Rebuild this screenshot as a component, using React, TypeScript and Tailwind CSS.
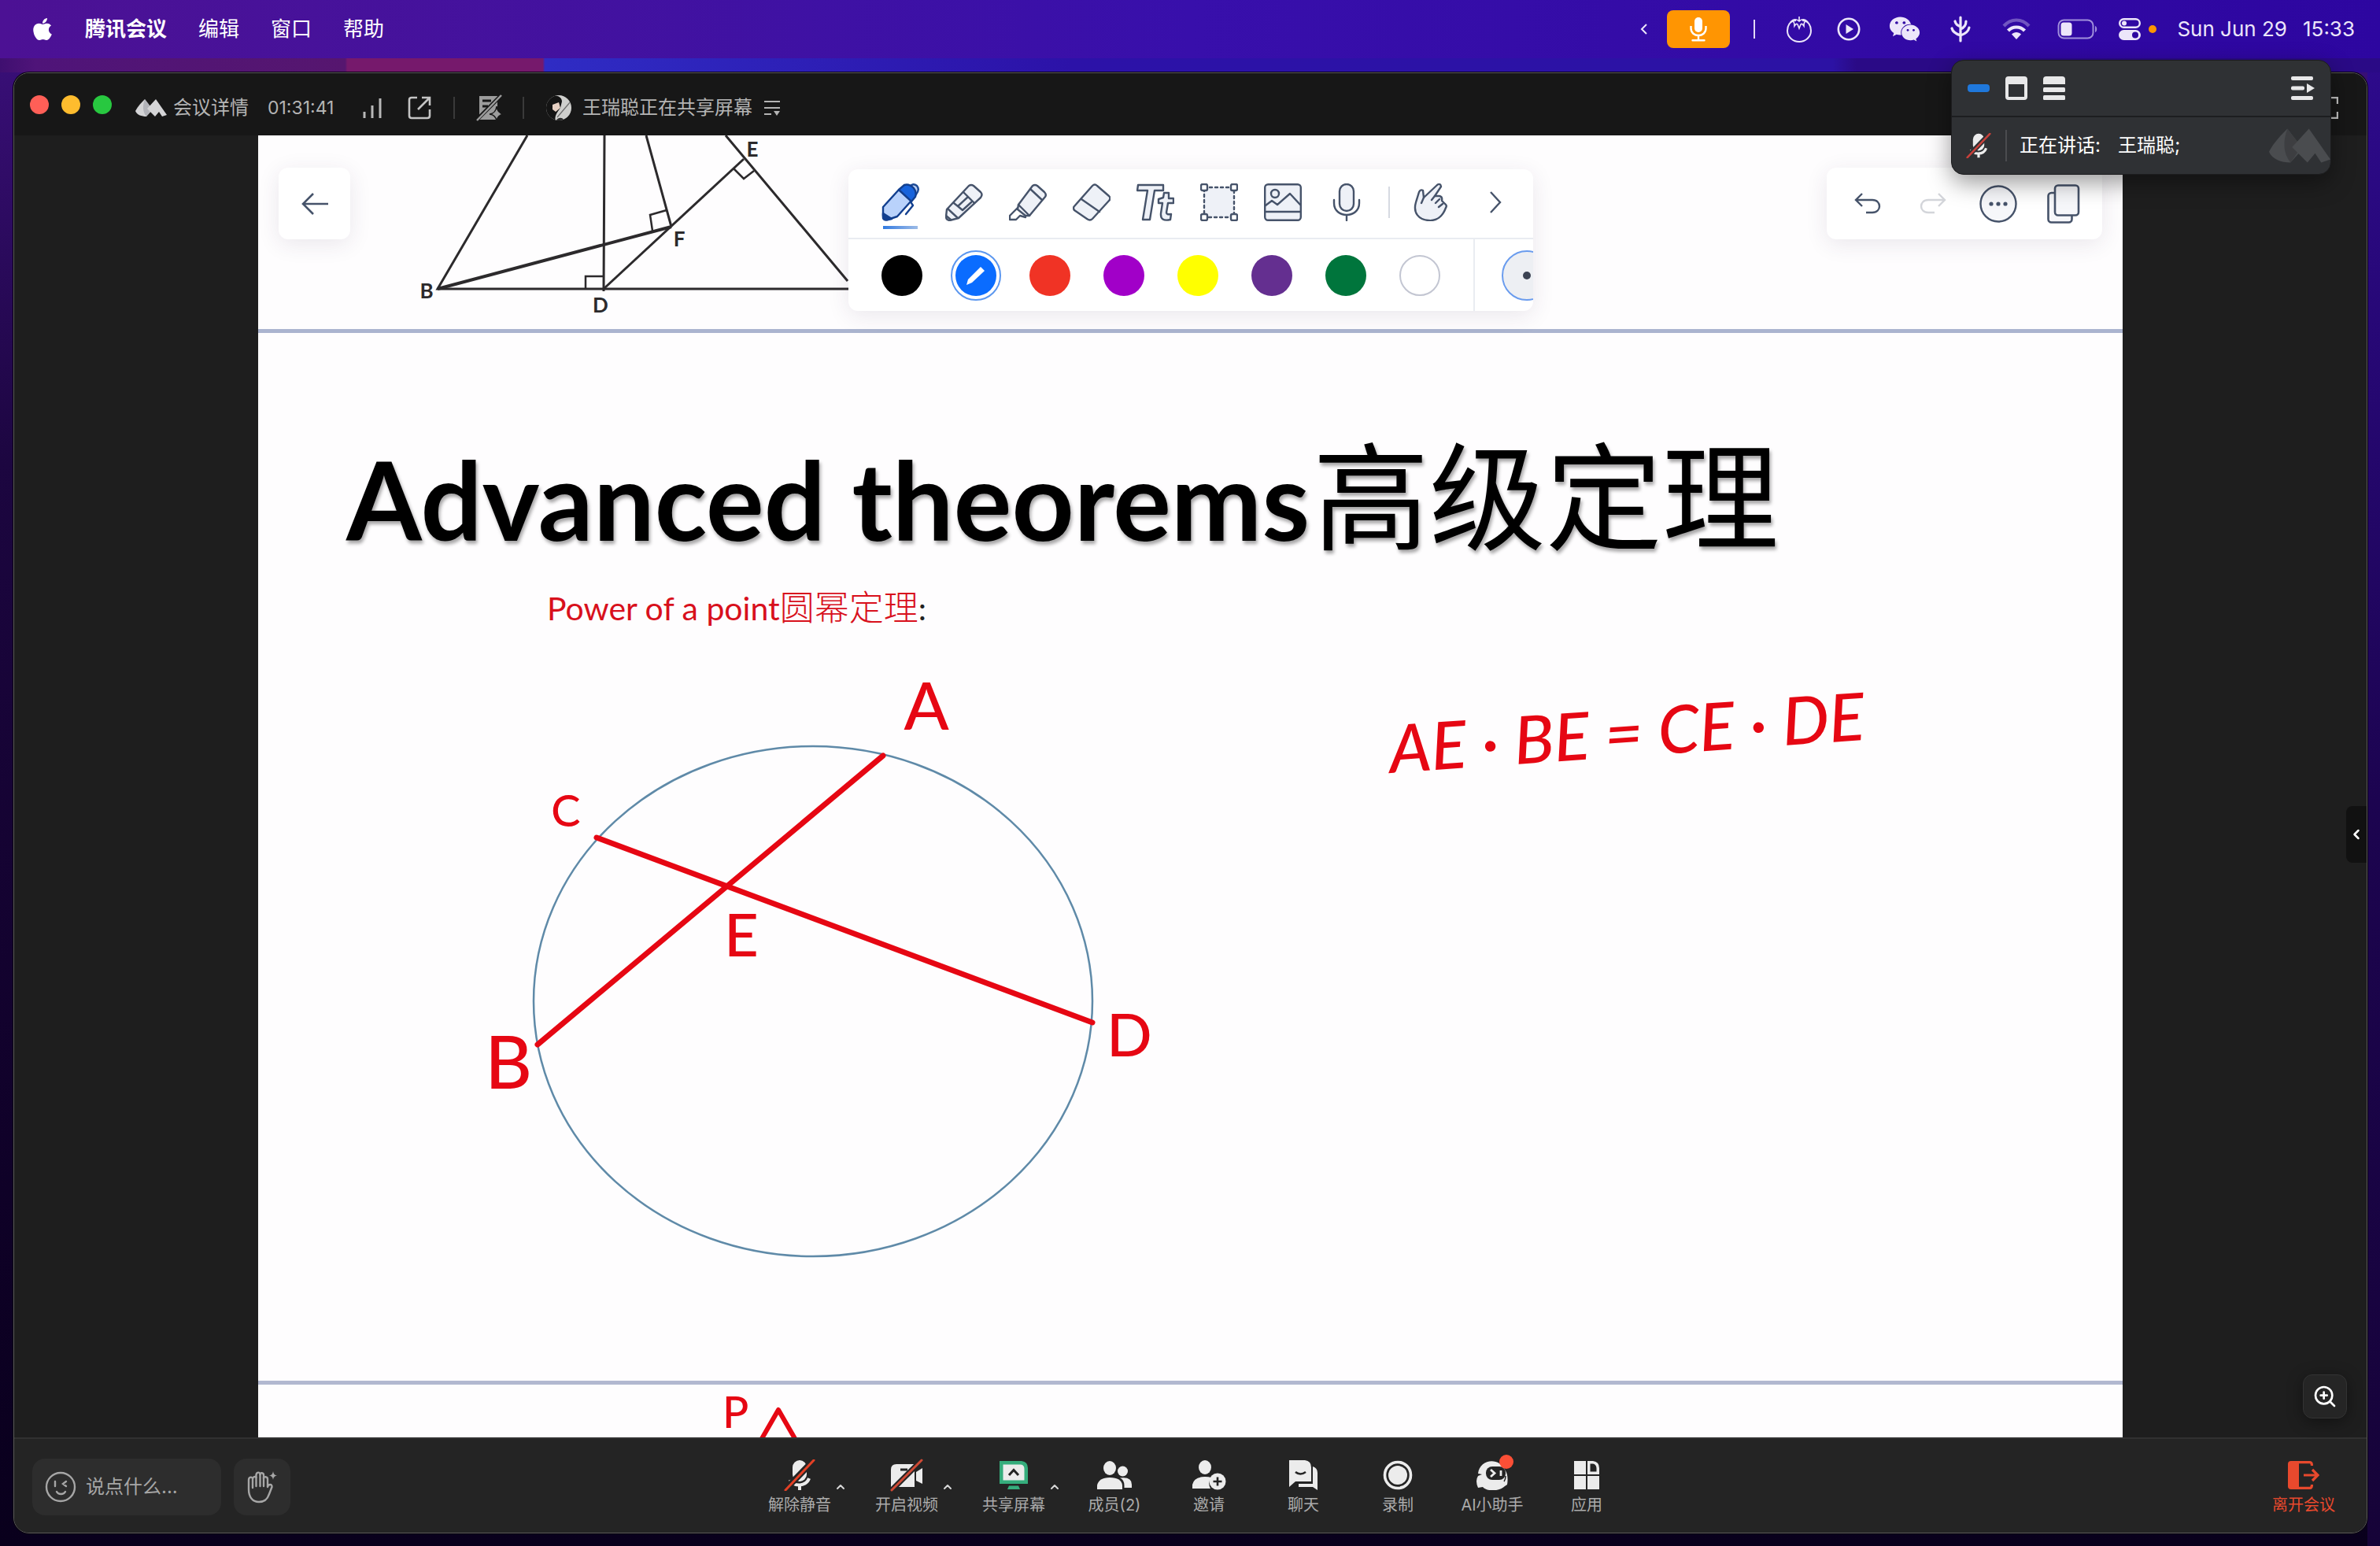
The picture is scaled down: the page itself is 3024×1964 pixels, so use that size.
import React from "react";
import type { ReactNode } from "react";
import { FaApple, FaWeixin } from "react-icons/fa";
import { ChevronLeft, ChevronUp, ZoomIn } from "lucide-react";

/* ---------- shared marks ---------- */

function MeetingLogo({ className, from, to }: { className: string; from: string; to: string }) {
  return (
    <svg viewBox="0 0 40 22" className={className} aria-hidden="true">
      <path d="M0 15 C3 9 8 4 12 0 L22 13 L14 22 C8 22 2 20 0 15 Z" fill={from} />
      <path d="M12 0 L21 12 L14 22 C9 16 9 8 12 0 Z" fill={to} opacity="0.7" />
      <path d="M26 0 L40 20 L34 22 L30 16 L25 22 L15 12 Z" fill={from} />
    </svg>
  );
}

function MutedMic({ className, slash, gap }: { className: string; slash: string; gap: string }) {
  return (
    <svg viewBox="0 0 40 40" className={className} fill="none" aria-hidden="true">
      <rect x="11" y="1" width="18" height="27" rx="9" fill="#ececec" />
      <path d="M8 26 C10 34 28 36 32 24" stroke="#ececec" strokeWidth="4" />
      <path d="M20 32 V39" stroke="#ececec" strokeWidth="4" />
      <path d="M1 39 L38 1" stroke={gap} strokeWidth="8" />
      <path d="M2 39 L38 1" stroke={slash} strokeWidth="3" strokeLinecap="round" />
    </svg>
  );
}

/* ---------- macOS menu bar ---------- */

function MenuBar() {
  return (
    <header className="flex h-[74px] items-center justify-between bg-linear-to-r from-[#4c1194] via-[#380fab] to-[#2d06a0] pr-8 pl-[38px] text-[26px] leading-8 text-white">
      <nav className="flex items-center gap-10" aria-label="菜单栏">
        <FaApple className="h-8 w-8" />
        <button className="-ml-0.5 font-bold">腾讯会议</button>
        <button>编辑</button>
        <button>窗口</button>
        <button>帮助</button>
      </nav>
      <div className="flex items-center text-[#ece6fa]">
        <svg viewBox="0 0 10 14" className="mr-6 h-3.5 w-2.5" fill="none" stroke="currentColor" strokeWidth="2">
          <path d="M8 1 L2 7 L8 13" />
        </svg>
        <button aria-label="麦克风" className="flex h-12 w-20 items-center justify-center rounded-lg bg-[#ff9502]">
          <svg viewBox="0 0 24 32" className="h-8 w-6" fill="none" stroke="#fff" strokeWidth="2.4">
            <rect x="7" y="1" width="10" height="19" rx="5" fill="#fff" stroke="none" />
            <path d="M2.500 12 V15 C2.500 27 21.500 27 21.500 15 V12" />
            <path d="M12 24 V30 M4.500 30.200 H19.500" strokeLinecap="round" />
          </svg>
        </button>
        <span className="ml-[30px] h-6 w-0.5 bg-[#e2d8f6]" />
        {/* tomato timer */}
        <svg viewBox="0 0 32 34" className="ml-10 h-[34px] w-8" fill="none" stroke="currentColor" strokeWidth="2">
          <path d="M12 6 C4 6 1 13 1 19 C1 27 8 33 16 33 C24 33 31 27 31 19 C31 13 28 6 20 6" />
          <path d="M16 1 V7 M16 7 C12 3 8 5 6 7 C9 7 10 8 10 13 C12 10 13 10 14 11 L16 16 L18 11 C19 10 20 10 22 13 C22 8 23 7 26 7 C24 5 20 3 16 7 Z" strokeWidth="1.600" />
        </svg>
        <svg viewBox="0 0 30 30" className="ml-8 h-[30px] w-[30px]" fill="none" stroke="currentColor" strokeWidth="2.600">
          <circle cx="15" cy="15" r="13.200" />
          <path d="M11.500 9 V21 L21 15 Z" fill="currentColor" stroke="none" />
        </svg>
        <FaWeixin className="ml-9 h-10 w-10" />
        {/* sprout */}
        <svg viewBox="0 0 26 34" className="ml-[38px] h-[34px] w-[26px]" fill="none" stroke="currentColor" strokeWidth="3.200" strokeLinecap="round">
          <path d="M13 2 V32 M13 17 C18 15 20 12 20 7 M13 14 C9 12 7 11 6 7 M13 25 C19 23 23 20 24 15 M13 25 C7 23 3 20 2 16" />
        </svg>
        {/* wifi */}
        <svg viewBox="0 0 36 28" className="ml-10 h-7 w-9" fill="none" stroke="currentColor" strokeWidth="4.200">
          <path d="M2 10 C11 0 25 0 34 10" opacity="0.350" />
          <path d="M7.500 16 C13 10 23 10 28.500 16" />
          <path d="M12 20.500 C15 17 21 17 24 20.500 L18 27 Z" fill="currentColor" stroke="none" />
        </svg>
        {/* battery */}
        <svg viewBox="0 0 52 26" className="ml-[34px] h-[26px] w-[52px]" fill="none">
          <rect x="1.500" y="1.500" width="44" height="23" rx="7" stroke="#a08fdb" strokeWidth="2" />
          <rect x="4.500" y="4.500" width="14" height="17" rx="3.500" fill="currentColor" />
          <path d="M48 9 C51 10 51 16 48 17 Z" fill="#a08fdb" />
        </svg>
        {/* control centre */}
        <svg viewBox="0 0 28 28" className="ml-[26px] h-7 w-7" fill="none">
          <rect x="1.200" y="1.200" width="25.600" height="10.600" rx="5.300" stroke="currentColor" strokeWidth="2.400" />
          <circle cx="7" cy="6.500" r="3" fill="currentColor" />
          <rect x="0" y="15" width="28" height="13" rx="6.500" fill="currentColor" />
          <circle cx="21" cy="21.500" r="4" fill="#2d06a0" />
        </svg>
        <span className="ml-2.5 h-2.5 w-2.5 rounded-full bg-[#ff9502]" />
        <time className="ml-[26px] flex gap-5">
          <span>Sun Jun 29</span>
          <span>15:33</span>
        </time>
      </div>
    </header>
  );
}

/* ---------- window title bar ---------- */

function TitleBar() {
  return (
    <div className="flex h-[79px] shrink-0 items-center bg-[#171717] pt-2 pl-5 text-2xl leading-8 text-[#b4b4b4]">
      <div className="flex gap-4 pb-2">
        <button aria-label="关闭" className="h-6 w-6 rounded-full bg-[#ff5f57]" />
        <button aria-label="最小化" className="h-6 w-6 rounded-full bg-[#febc2e]" />
        <button aria-label="缩放" className="h-6 w-6 rounded-full bg-[#28c840]" />
      </div>
      <button className="ml-[30px] flex items-center gap-2">
        <MeetingLogo className="h-[22px] w-10" from="#d4d4d6" to="#a4a5ac" />
        会议详情
      </button>
      <span className="ml-6 w-24 text-[23px]">01:31:41</span>
      <svg viewBox="0 0 26 26" className="ml-6 h-[26px] w-[26px]" stroke="#b8b8b8" strokeWidth="3">
        <path d="M3 26 V18 M13 26 V10 M23 26 V1" />
      </svg>
      <button aria-label="弹出" className="ml-8">
        <svg viewBox="0 0 30 30" className="h-[30px] w-[30px]" fill="none" stroke="#c4c4c4" strokeWidth="2.600">
          <path d="M12 2 H5 Q2 2 2 5 V25 Q2 28 5 28 H25 Q28 28 28 25 V17" />
          <path d="M18 2 H28 V12 M28 2 L13 17" />
        </svg>
      </button>
      <span className="ml-7 h-7 w-0.5 bg-[#3a3a3a]" />
      <svg viewBox="0 0 36 34" className="ml-[26px] h-[34px] w-9">
        <path d="M5 2 H28 V32 H5 Z" fill="#9c9c9c" />
        <path d="M9 8 H20 M9 15 H16" stroke="#171717" strokeWidth="3" />
        <path d="M1 33 L33 1" stroke="#171717" strokeWidth="5" />
        <path d="M2 33 L33 1" stroke="#9c9c9c" strokeWidth="2.500" />
        <path d="M27 15 Q28 24 36 25 Q28 26 27 34 Q26 26 18 25 Q26 24 27 15 Z" fill="#9c9c9c" stroke="#171717" strokeWidth="1.500" />
      </svg>
      <span className="ml-6 h-7 w-0.5 bg-[#3a3a3a]" />
      <svg viewBox="0 0 36 36" className="ml-[26px] h-9 w-9">
        <defs>
          <clipPath id="avatar-clip">
            <circle cx="18" cy="18" r="16" />
          </clipPath>
        </defs>
        <g clipPath="url(#avatar-clip)">
          <rect width="36" height="36" fill="#cfcfcd" />
          <path d="M2 10 C4 0 22 0 22 10 L20 18 C16 24 12 28 14 36 H2 Z" fill="#141414" />
          <path d="M10 14 L18 11 L20 18 L14 23 L10 20 Z" fill="#e6cfc2" />
          <path d="M14 36 C16 28 26 30 24 36 Z" fill="#2a2a2a" />
          <path d="M16 30 L33 10" stroke="#6b6b6b" strokeWidth="1.200" />
        </g>
      </svg>
      <button className="ml-3 flex items-center gap-[14px]">
        王瑞聪正在共享屏幕
        <svg viewBox="0 0 22 20" className="h-5 w-[22px]" stroke="#b4b4b4" strokeWidth="2.200">
          <path d="M1 2 H21 M1 10 H21 M1 18 H10" />
          <path d="M13 14 H21 L17 20 Z" fill="#b4b4b4" stroke="none" />
        </svg>
      </button>
      <button aria-label="全屏" className="mr-9 ml-auto">
        <svg viewBox="0 0 28 28" className="h-7 w-7" fill="none" stroke="#c4c4c4" strokeWidth="2.400">
          <path d="M1 9 V1 H9 M19 1 H27 V9 M27 19 V27 H19 M9 27 H1 V19" />
        </svg>
      </button>
    </div>
  );
}

/* ---------- floating speaker panel ---------- */

function SpeakerPanel() {
  return (
    <aside className="absolute top-[76px] right-[62px] z-20 w-[483px] overflow-hidden rounded-2xl border border-[#1c1c1e] bg-[#2f3134] text-2xl text-white shadow-[0_10px_30px_rgba(0,0,0,0.4)]">
      <div className="flex h-[72px] items-center gap-5 border-b-2 border-[#1d1e20] px-5">
        <button aria-label="最小" className="flex h-8 w-7 items-center">
          <span className="h-2.5 w-7 rounded-sm bg-[#1f78dc]" />
        </button>
        <button aria-label="单窗口">
          <svg viewBox="0 0 28 30" className="h-[30px] w-7">
            <path fillRule="evenodd" d="M4 0 H24 Q28 0 28 4 V26 Q28 30 24 30 H4 Q0 30 0 26 V4 Q0 0 4 0 Z M4 10 V26 H24 V10 Z" fill="#e8e8e9" />
          </svg>
        </button>
        <button aria-label="列表">
          <svg viewBox="0 0 28 30" className="h-[30px] w-7" fill="#e8e8e9">
            <path d="M0 10 V4 Q0 0 4 0 H24 Q28 0 28 4 V10 Z" />
            <rect y="14" width="28" height="6" rx="1.500" />
            <rect y="24" width="28" height="6" rx="1.500" />
          </svg>
        </button>
        <button aria-label="收起" className="ml-auto">
          <svg viewBox="0 0 30 30" className="h-[30px] w-[30px]" fill="#e8e8e9">
            <rect width="28" height="5" rx="2" />
            <rect y="12.500" width="17" height="5" rx="2" />
            <path d="M20 9 L30 15 L20 21 Z" />
            <rect y="25" width="28" height="5" rx="2" />
          </svg>
        </button>
      </div>
      <div className="flex h-[72px] items-center">
        <MutedMic className="ml-[18px] h-8 w-8" slash="#c8403a" gap="#2f3134" />
        <span className="ml-[18px] h-10 w-0.5 bg-[#4b4c4f]" />
        <span className="ml-4">正在讲话:</span>
        <span className="ml-[22px]">王瑞聪;</span>
        <MeetingLogo className="ml-auto h-[44px] w-[78px]" from="#4a4c4f" to="#38393c" />
      </div>
    </aside>
  );
}

/* ---------- whiteboard tools ---------- */

const ink = "#46536a";
const wash = "#eef1f7";

function Glyph({ children }: { children: ReactNode }) {
  return (
    <svg viewBox="0 0 48 48" className="h-12 w-12" fill="none" stroke={ink} strokeWidth="2.400" strokeLinejoin="round" strokeLinecap="round">
      {children}
    </svg>
  );
}

const tools: { label: string; icon: ReactNode }[] = [
  {
    label: "钢笔",
    icon: (
      <Glyph>
        <path d="M36 4 Q40 -1 45 3 Q49 8 44 14 Z" fill="#b9cdf2" stroke="#1f4c96" />
        <path d="M2 30 L22 8 L38 22 L20 42 L8 46 Q1 48 2 38 Z" fill="#b9d2fb" stroke="#123f8f" />
        <path d="M22 8 L29 2 Q35 0 41 6 Q45 11 43 17 L38 23 Z" fill="#1763dc" stroke="#123f8f" />
        <path d="M2 38 L2 44 Q3 47 8 46 L13 45 Z" fill="#123f8f" stroke="#123f8f" />
        <path d="M38 25 L40 28 L31 39" stroke="#123f8f" />
      </Glyph>
    ),
  },
  {
    label: "铅笔",
    icon: (
      <Glyph>
        <path d="M2 33 L30 3 Q33 1 36 3 L45 11 Q48 14 45 18 L17 44 L6 47 Q1 47 1 42 Z" fill={wash} />
        <path d="M23 11 L37 25 M3 32 L16 44 M11 25 L16 29 L29 17 M16 29 L22 34 L33 24 M1 41 L7 46" />
      </Glyph>
    ),
  },
  {
    label: "荧光笔",
    icon: (
      <Glyph>
        <path d="M12 27 L30 3 Q33 1 36 3 L45 11 Q48 14 46 17 L26 41 L21 41 L11 33 Z" fill={wash} />
        <path d="M27 7 L42 21 M12 27 L26 41 M11 31 L1 41 V46 H9 L14 41 L21 43" />
      </Glyph>
    ),
  },
  {
    label: "橡皮擦",
    icon: (
      <Glyph>
        <path d="M2 29 L25 3 Q28 0 31 3 L46 16 Q49 19 46 22 L25 45 Q22 48 18 45 L2 34 Q0 31 2 29 Z" fill={wash} />
        <path d="M11 20 L34 36" />
      </Glyph>
    ),
  },
  {
    label: "文本",
    icon: (
      <Glyph>
        <path d="M2 2 H34 V9 H23 L17 46 H8 L14 9 H1 Z" fill={wash} />
        <path d="M35 12 H41 V19 H47 V25 H40 L38 37 Q38 40 44 39 L43 46 Q30 49 31 38 L33 25 H28 V20 L34 18 Z" fill={wash} />
      </Glyph>
    ),
  },
  {
    label: "选择",
    icon: (
      <Glyph>
        <rect x="5" y="5" width="38" height="38" fill={wash} strokeDasharray="3 4" />
        <rect x="1" y="1" width="8" height="8" rx="2" fill="#fff" />
        <rect x="39" y="1" width="8" height="8" rx="2" fill="#fff" />
        <rect x="1" y="39" width="8" height="8" rx="2" fill="#fff" />
        <rect x="39" y="39" width="8" height="8" rx="2" fill="#fff" />
      </Glyph>
    ),
  },
  {
    label: "图片",
    icon: (
      <Glyph>
        <rect x="1.200" y="1.200" width="45.600" height="45.600" rx="4" fill={wash} />
        <circle cx="14" cy="13" r="5" />
        <path d="M2 28 L10 22 L17 27 L33 13 L46 27 M1 36 H47" />
      </Glyph>
    ),
  },
  {
    label: "录音",
    icon: (
      <Glyph>
        <rect x="15" y="1" width="18" height="34" rx="9" fill={wash} />
        <path d="M8 21 V25 C8 45 40 45 40 25 V21 M24 40 V47" />
      </Glyph>
    ),
  },
];

const swatches = [
  { name: "黑色", tone: "bg-black" },
  { name: "蓝色", tone: "bg-[#0a6cff]" },
  { name: "红色", tone: "bg-[#f03325]" },
  { name: "洋红", tone: "bg-[#a100c8]" },
  { name: "黄色", tone: "bg-[#ffff00]" },
  { name: "紫色", tone: "bg-[#642f90]" },
  { name: "绿色", tone: "bg-[#00753c]" },
  { name: "白色", tone: "border-2 border-[#c3c6d2] bg-white" },
];

const card = "rounded-xl bg-white shadow-[0_6px_28px_rgba(60,40,80,0.1)]";

function BoardTools() {
  return (
    <div className="absolute inset-x-0 top-[41px] grid grid-cols-[1fr_auto_1fr] items-start px-[26px]">
      <button aria-label="返回" className={`flex h-[91px] w-[91px] items-center justify-center ${card}`}>
        <svg viewBox="0 0 34 28" className="h-7 w-[34px]" fill="none" stroke={ink} strokeWidth="2.600">
          <path d="M15 1 L2 14 L15 27 M2 14 H34" />
        </svg>
      </button>
      <div className={`mt-0.5 w-[870px] overflow-hidden ${card}`}>
        <div className="flex h-[89px] items-center gap-[33px] border-b-2 border-[#e9ecf1] pb-1 pl-[42px]">
          {tools.map((t, i) => (
            <button key={t.label} aria-label={t.label} className="relative shrink-0">
              {t.icon}
              {i === 0 && <span className="absolute -bottom-2.5 left-0.5 h-1 w-[44px] bg-linear-to-r from-[#2f7ae0] to-[#9dbbe6]" />}
            </button>
          ))}
          <span className="-mx-1 h-10 w-0.5 shrink-0 bg-[#d6dae2]" />
          <button aria-label="手势" className="shrink-0">
            <Glyph>
              <path d="M4 24 L8 11 Q10 7 13 9 L14 18 L31 2 Q35 -1 36 4 L28 16 L34 16 Q38 17 37 22 L41 26 Q44 28 42 31 C38 42 30 48 20 47 C8 46 0 38 4 24 Z" fill={wash} />
              <path d="M14 18 L11 25 M28 16 L24 21 M34 20 L29 25 M38 26 L33 30" />
            </Glyph>
          </button>
          <button aria-label="更多工具" className="flex w-12 shrink-0 justify-center">
            <svg viewBox="0 0 16 28" className="h-7 w-4" fill="none" stroke={ink} strokeWidth="2.400">
              <path d="M2 1 L14 14 L2 27" />
            </svg>
          </button>
        </div>
        <div className="flex h-[91px] items-center gap-[42px] pl-[42px]">
          {swatches.map((s, i) => (
            <button
              key={s.name}
              aria-label={s.name}
              className={`flex h-[52px] w-[52px] shrink-0 items-center justify-center rounded-full ${s.tone} ${i === 1 ? "outline-2 outline-offset-4 outline-[#5c97ef]" : ""}`}
            >
              {i === 1 && (
                <svg viewBox="0 0 24 24" className="h-6 w-6" fill="#fff">
                  <path d="M18 1 L23 6 L7 21 L0 24 L2 17 Z" />
                </svg>
              )}
            </button>
          ))}
          <span className="h-full w-0.5 shrink-0 bg-[#e9ecf1]" />
          <button aria-label="笔画粗细" className="-ml-2 flex h-16 w-16 shrink-0 items-center justify-center rounded-full border-2 border-[#6a9cee] bg-[#edeff3]">
            <span className="h-2.5 w-2.5 rounded-full bg-[#3c4353]" />
          </button>
        </div>
      </div>
      <div className={`flex h-[91px] w-[350px] items-center gap-[35px] justify-self-end pl-7 ${card}`}>
        <button aria-label="撤销" className="flex w-12 justify-center">
          <svg viewBox="0 0 34 28" className="h-7 w-[34px]" fill="none" stroke={ink} strokeWidth="2.400">
            <path d="M10 1 L2 9 L10 17 M2 9 H23 C35 9 35 25 23 25 H15" />
          </svg>
        </button>
        <button aria-label="重做" className="flex w-12 justify-center">
          <svg viewBox="0 0 34 28" className="h-7 w-[34px]" fill="none" stroke="#d3d5da" strokeWidth="2.400">
            <path d="M24 1 L32 9 L24 17 M32 9 H11 C-1 9 -1 25 11 25 H19" />
          </svg>
        </button>
        <button aria-label="更多" className="flex w-12 justify-center">
          <svg viewBox="0 0 48 48" className="h-12 w-12" stroke={ink} strokeWidth="2.400">
            <circle cx="24" cy="24" r="22.500" fill="#f6f7fa" />
            <g fill={ink} stroke="none">
              <circle cx="15" cy="24" r="2.600" />
              <circle cx="24" cy="24" r="2.600" />
              <circle cx="33" cy="24" r="2.600" />
            </g>
          </svg>
        </button>
        <button aria-label="页面" className="flex w-12 justify-center">
          <svg viewBox="0 0 42 50" className="h-[50px] w-[42px]" fill="#f6f7fa" stroke={ink} strokeWidth="2.600">
            <rect x="1.500" y="11" width="30" height="37.500" rx="4" />
            <rect x="10" y="1.500" width="30" height="38" rx="4" />
          </svg>
        </button>
      </div>
    </div>
  );
}

/* ---------- shared whiteboard ---------- */

function TriangleFigure() {
  return (
    <svg viewBox="0 0 560 240" className="ml-[200px] h-[240px] w-[560px]" fill="none" stroke="#2c2a2c" strokeWidth="3">
      <path d="M142 0 L28 195 H560" />
      <path d="M240 0 L239 198 M293 0 L325 116 M394 0 L549 185" />
      <path d="M28 195 L325 116" strokeWidth="4" />
      <path d="M240 194 L417 30" />
      <path d="M319 95 L298 101 L301 121 M404 42 L417 55 L430 45 M216 194 V179 H239" strokeWidth="2.500" />
      <g fill="#2c2a2c" stroke="none" className="font-[Lato] text-[26px] font-bold" textAnchor="middle">
        <text x="14" y="207">B</text>
        <text x="235" y="225">D</text>
        <text x="335" y="141">F</text>
        <text x="428" y="27">E</text>
      </g>
    </svg>
  );
}

function CircleFigure() {
  return (
    <svg viewBox="-20 -20 880 780" className="h-[780px] w-[880px] shrink-0" fill="none">
      <ellipse cx="413" cy="421" rx="355" ry="324" stroke="#5f8aa8" strokeWidth="2.500" />
      <g stroke="#e60713" strokeWidth="7" strokeLinecap="round">
        <path d="M502 109 L63 476" />
        <path d="M138 213 L768 448" />
      </g>
      <g fill="#e60713" textAnchor="middle" className="font-[Lato] font-medium">
        <text x="557" y="76" className="text-[84px]">A</text>
        <text x="99" y="199" className="text-[56px]">C</text>
        <text x="322" y="364" className="text-[76px]">E</text>
        <text x="26" y="532" className="text-[92px]">B</text>
        <text x="815" y="491" className="text-[76px]">D</text>
      </g>
    </svg>
  );
}

function Board() {
  return (
    <main className="relative flex min-w-0 flex-1 flex-col overflow-hidden bg-[#fefdfe]">
      <section className="h-[251px] shrink-0 overflow-hidden border-b-[5px] border-[#abb4cf]">
        <TriangleFigure />
      </section>
      <section className="min-h-0 flex-1 overflow-hidden pt-[116px] pl-[112px]">
        <h1 className="flex h-[190px] items-baseline whitespace-nowrap text-black [text-shadow:2px_4px_4px_rgba(0,0,0,0.35)]">
          <span className="font-[Lato] text-[138px] leading-[190px] font-bold">Advanced theorems</span>
          <span className="ml-1 text-[148px] leading-[190px] font-normal">高级定理</span>
        </h1>
        <p className="mt-3.5 ml-[255px] font-[Lato,'Noto_Sans_CJK_SC'] text-[41px] leading-[56px] whitespace-nowrap text-[#d8101c]">
          Power of a point<span className="text-[44px] font-light">圆幂定理</span>
          <span className="text-[#222]">:</span>
        </p>
        <div className="mt-[30px] ml-[160px] flex items-start">
          <CircleFigure />
          <p className="mt-[42px] ml-[284px] origin-center -rotate-4 font-[Lato] text-[84px] leading-[112px] font-medium whitespace-nowrap text-[#e60713] italic">
            AE · BE = CE · DE
          </p>
        </div>
      </section>
      <section className="h-[72px] shrink-0 overflow-hidden border-t-[5px] border-[#b2b8d0]">
        <svg viewBox="0 0 120 67" className="ml-[580px] h-[67px] w-[120px]" fill="none">
          <text x="10" y="55" fill="#e60713" className="font-[Lato] text-[55px] font-medium">P</text>
          <path d="M58 72 L81 32 L104 72" stroke="#e60713" strokeWidth="6" strokeLinejoin="round" />
        </svg>
      </section>
      <BoardTools />
    </main>
  );
}

/* ---------- bottom bar ---------- */

const pale = "#ececec";

function BarItem({ label, children, caret, extra = "w-20" }: { label: string; children: ReactNode; caret?: boolean; extra?: string }) {
  return (
    <div className="flex items-center gap-1">
      <button className={`flex flex-col items-center gap-1.5 whitespace-nowrap ${extra}`}>
        <span className="relative flex h-10 items-center">{children}</span>
        <span>{label}</span>
      </button>
      {caret && (
        <button aria-label={`${label}选项`} className="w-3">
          <ChevronUp className="h-4 w-4 text-[#d8d8d8]" strokeWidth={3} />
        </button>
      )}
    </div>
  );
}

function BottomBar() {
  return (
    <footer className="grid h-[121px] shrink-0 grid-cols-[1fr_auto_1fr] items-center border-t-2 border-[#313131] bg-[#242424] pt-0.5 pr-4 pl-[23px] text-xl leading-6 text-[#ababab]">
      <div className="flex gap-4">
        <label className="flex h-[72px] w-[240px] items-center gap-3 rounded-2xl bg-[#2d2d2d] pl-4">
          <svg viewBox="0 0 40 40" className="h-10 w-10 shrink-0" fill="none" stroke="#a6a6a6" strokeWidth="2.400" strokeLinecap="round">
            <circle cx="20" cy="20" r="18" />
            <path d="M13 13 V19 M27 13 L23 16 L27 19 M15 26 C17 30 24 30 26 26" />
          </svg>
          <input
            type="text"
            aria-label="说点什么"
            placeholder="说点什么..."
            className="w-full min-w-0 bg-transparent text-2xl text-[#ababab] outline-none placeholder:text-[#a6a6a6]"
          />
        </label>
        <button aria-label="举手" className="flex h-[72px] w-[72px] items-center justify-center rounded-2xl bg-[#2d2d2d]">
          <svg viewBox="0 0 40 42" className="h-[42px] w-10" fill="none" stroke="#a6a6a6" strokeWidth="2.400" strokeLinejoin="round" strokeLinecap="round">
            <path d="M8 22 V11 C8 7.500 3 8 3 12 V24 C3 34 8 40 16 40 C24 40 27 36 29 30 L32.500 21 C33 17 28 17 27 21 V11 C27 7.500 22 7.500 22 10 V6 C22 2.500 17.500 2.500 17.500 5 C17.500 1.500 12.500 2 12.500 6 V9 C11.500 7 8 8 8 11" />
            <path d="M12.500 9 V20 M17.500 5 V20 M22 9 V20" />
            <path d="M34 1 Q34.500 6 39 6.500 Q34.500 7 34 12 Q33.500 7 29 6.500 Q33.500 6 34 1 Z" fill="#a6a6a6" stroke="none" />
          </svg>
        </button>
      </div>

      <div className="flex items-center gap-10">
        <BarItem label="解除静音" caret>
          <MutedMic className="h-10 w-10" slash="#e34025" gap="#242424" />
        </BarItem>
        <BarItem label="开启视频" caret>
          <svg viewBox="0 0 42 42" className="h-[42px] w-[42px]">
            <path d="M8 7 H31 V36 H1 V14 Q1 7 8 7 Z" fill={pale} />
            <path d="M33 17 L41 12 V32 L33 28 Z" fill={pale} />
            <path d="M13 14 H22" stroke="#242424" strokeWidth="3" />
            <path d="M1 41 L40 2" stroke="#242424" strokeWidth="7" />
            <path d="M2 40 L40 2" stroke="#cf4a35" strokeWidth="3" strokeLinecap="round" />
          </svg>
        </BarItem>
        <BarItem label="共享屏幕" caret>
          <svg viewBox="0 0 36 36" className="h-9 w-9">
            <path d="M0 0 H28 Q36 1 36 9 V29 H0 Z" fill="#35ad7c" />
            <path d="M4.500 4.500 H27 Q31.500 5 31.500 10 V24.500 H4.500 Z" fill={pale} />
            <path d="M12 18 L18 11.500 L24 18" fill="none" stroke="#242424" strokeWidth="3" />
            <path d="M12 31.500 H24 L26 36 H10 Z" fill="#35ad7c" />
          </svg>
        </BarItem>
        <BarItem label="成员(2)" extra="mr-2 w-16">
          <svg viewBox="0 0 44 36" className="h-9 w-11" fill={pale}>
            <ellipse cx="16" cy="9" rx="8" ry="9" />
            <path d="M0 36 V31 Q2 21 16 21 Q31 21 32 31 V36 Z" />
            <circle cx="32.500" cy="13" r="6.500" />
            <path d="M30 21.500 Q44 20 44 30 V34 H34.500 V31 Q34.500 24 29 21.500 Z" />
          </svg>
        </BarItem>
        <BarItem label="邀请">
          <svg viewBox="0 0 44 38" className="h-[38px] w-11" fill={pale}>
            <ellipse cx="17" cy="9" rx="8" ry="9" />
            <path d="M1 36 V31 Q3 21 17 21 Q22 21 25 22 Q20 29 24 36 Z" />
            <circle cx="33" cy="27" r="10.500" />
            <path d="M33 21.500 V32.500 M27.500 27 H38.500" stroke="#242424" strokeWidth="2.600" />
          </svg>
        </BarItem>
        <BarItem label="聊天">
          <svg viewBox="0 0 36 38" className="h-[38px] w-9" fill={pale}>
            <path d="M0 0 H20 Q28 1 28 9 V27 H8 L0 34 Z" />
            <path d="M30 8 Q36 10 36 16 V38 L30 34 H12 V30 H30 Z" />
            <path d="M8 15 Q14 20 21 15" fill="none" stroke="#242424" strokeWidth="2.600" />
          </svg>
        </BarItem>
        <BarItem label="录制">
          <svg viewBox="0 0 38 38" className="h-[38px] w-[38px]">
            <circle cx="19" cy="19" r="16.500" fill="none" stroke={pale} strokeWidth="3.600" />
            <circle cx="19" cy="19" r="12" fill={pale} />
          </svg>
        </BarItem>
        <BarItem label="AI小助手">
          <svg viewBox="0 0 42 38" className="h-[38px] w-[42px]">
            <path d="M3 17 C5 -2 30 -4 37 12 Q42 19 40 31 L37 33 C30 40 14 40 9 34 L3 35 Q-1 26 3 20 L8 18 Z" fill={pale} />
            <rect x="13" y="8" width="25" height="17" rx="8" fill="#242424" />
            <path d="M19 12 L24 16.500 L19 21" fill="none" stroke={pale} strokeWidth="2.800" />
            <path d="M32 13 V20" stroke={pale} strokeWidth="2.800" />
            <path d="M36 27 Q38 24 38 20" fill="none" stroke="#242424" strokeWidth="1.500" />
          </svg>
          <span className="absolute -top-1.5 -right-1.5 h-[18px] w-[18px] rounded-full bg-[#fb4f36]" />
        </BarItem>
        <BarItem label="应用">
          <svg viewBox="0 0 32 36" className="h-9 w-8" fill={pale}>
            <rect width="15" height="17" />
            <rect y="19" width="15" height="17" />
            <rect x="17" y="19" width="15" height="17" />
            <path fillRule="evenodd" d="M17 0 H24 Q32 1 32 9 V17 H17 Z M20.500 3.500 V13.500 H28.500 V9 Q28 4 24 3.500 Z" />
          </svg>
        </BarItem>
      </div>

      <div className="flex justify-end pr-6 text-[#e8492d]">
        <BarItem label="离开会议">
          <svg viewBox="0 0 40 36" className="h-9 w-10" fill="none" stroke="#e8492d" strokeWidth="3.200">
            <path d="M4 0 H14 V36 H4 Q0 36 0 32 V4 Q0 0 4 0 Z" fill="#e8492d" stroke="none" />
            <path d="M12 1.600 H28 Q30.500 1.600 30.500 6 M12 34.400 H28 Q30.500 34.400 30.500 30" />
            <path d="M20 18 H37 M31 11 L38 18 L31 25" />
          </svg>
        </BarItem>
      </div>
    </footer>
  );
}

/* ---------- desktop ---------- */

export default function App() {
  return (
    <div className="relative flex h-screen min-h-[1200px] flex-col bg-linear-to-b from-[#3d1080] via-[#1c0640] via-30% to-[#09001c] font-[Inter,'Noto_Sans_CJK_SC',sans-serif]">
      <MenuBar />
      <div className="flex min-h-0 flex-1 flex-col bg-[linear-gradient(90deg,#3f0f70_0,#4f1479_1.5%,#56166f_14.5%,#76196c_14.6%,#76196c_22.8%,#2f2cc4_22.900%,#2c12a8_45%,#2c12a4_77%,#2a0a86_78%,#2a0a86_100%),linear-gradient(180deg,#2d0a8c,#1c0450_50%,#160338)] bg-[length:100%_18px,16px_100%] bg-[position:0_0,100%_0] bg-no-repeat pt-[18px] pr-4 pb-4 pl-[17px]">
        <div className="flex min-h-0 flex-1 flex-col overflow-hidden rounded-[20px] border border-[#5a5a5a] bg-[#1e1e1e] shadow-[0_0_0_1px_#08000f]">
          <TitleBar />
          <div className="relative flex min-h-0 flex-1 px-[310px]">
            <Board />
            <button aria-label="展开侧栏" className="absolute top-[53.7%] right-0 flex h-[72px] w-[26px] -translate-y-1/2 items-center justify-center rounded-l-lg bg-[#111] text-white">
              <ChevronLeft className="h-5 w-5" strokeWidth={3} />
            </button>
            <button aria-label="放大" className="absolute right-[25px] bottom-6 flex h-14 w-14 items-center justify-center rounded-xl border border-[#333] bg-[#252525] text-white shadow-[0_4px_20px_rgba(0,0,0,0.4)]">
              <ZoomIn className="h-8 w-8" />
            </button>
          </div>
          <BottomBar />
        </div>
      </div>
      <SpeakerPanel />
    </div>
  );
}
